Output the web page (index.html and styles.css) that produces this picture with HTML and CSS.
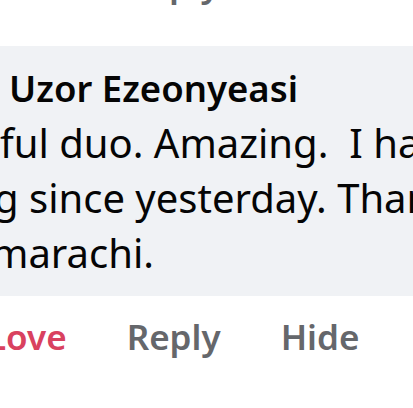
FILE: index.html
```html
<!DOCTYPE html>
<html lang="en">
<head>
  <meta charset="UTF-8" />
  <meta name="viewport" content="width=device-width, initial-scale=1.0"/>
  <title>Comment</title>
  <link rel="stylesheet" href="styles.css">
</head>
<body>

  <!-- previous comment actions, only the descenders peek in -->
  <div class="prev-actions">
    <span class="action">Reply</span>
  </div>

  <div class="bubble">
    <div class="author">Uzor Ezeonyeasi</div>
    <div class="line">ful duo. Amazing.&nbsp; I have</div>
    <div class="line line-mid">g since yesterday. Thank</div>
    <div class="line line-end">marachi.</div>
  </div>

  <div class="actions">
    <span class="action love">Love</span>
    <span class="action">Reply</span>
    <span class="action">Hide</span>
  </div>

</body>
</html>
```

FILE: styles.css
```css
body {
  font-family: 'Noto Sans', 'Open Sans', sans-serif;
  background-color: #ffffff;
  margin: 0;
  padding: 0;
  width: 413px;
  height: 408px;
  overflow: hidden;
  color: #050505;
}

.prev-actions {
  margin-top: -44px;
  padding-left: 126px;
  white-space: nowrap;
  font-size: 35px;
  line-height: 55px;
}

.bubble {
  margin-top: 35px;
  background-color: #f0f2f5;
  padding: 16px 0 16px 0;
  white-space: nowrap;
  overflow: hidden;
}

.author {
  font-size: 36.5px;
  line-height: 53px;
  font-weight: 600;
  padding-left: 9px;
}

.line {
  font-size: 40px;
  line-height: 55px;
}

.line-mid { margin-left: -6px; }
.line-end { margin-left: -9px; }

.actions {
  margin-top: 13px;
  display: flex;
  gap: 60px;
  margin-left: -13px;
  white-space: nowrap;
  font-size: 35px;
  line-height: 55px;
}

.action {
  font-weight: 600;
  color: #65676b;
}

.love {
  color: #d9415f;
}
```
